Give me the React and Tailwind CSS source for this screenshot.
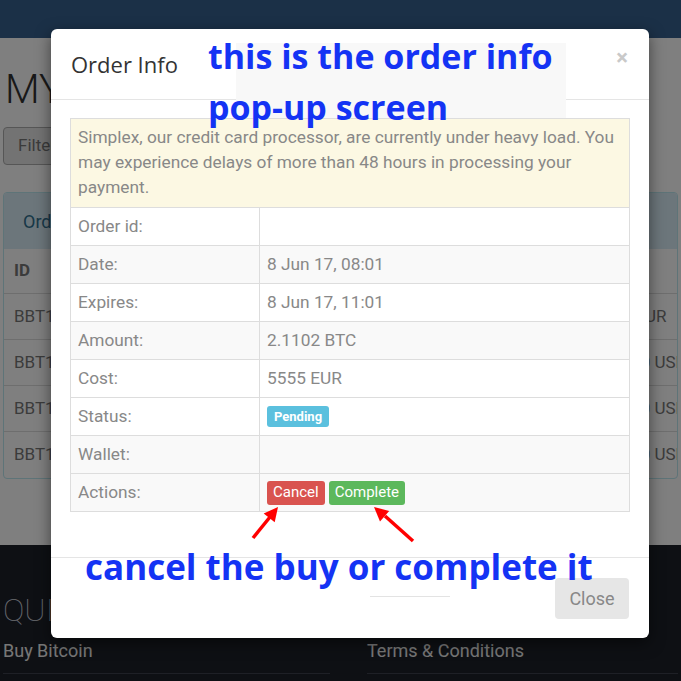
import React from "react";

const rows = [
  { label: "Order id:", value: "", bg: "bg-white" },
  { label: "Date:", value: "8 Jun 17, 08:01", bg: "bg-[#f9f9f9]" },
  { label: "Expires:", value: "8 Jun 17, 11:01", bg: "bg-white" },
  { label: "Amount:", value: "2.1102 BTC", bg: "bg-[#f9f9f9]" },
  { label: "Cost:", value: "5555 EUR", bg: "bg-white" },
  { label: "Status:", value: "pending", bg: "bg-white" },
  { label: "Wallet:", value: "", bg: "bg-[#f9f9f9]" },
  { label: "Actions:", value: "actions", bg: "bg-[#f9f9f9]" },
];

const orders = [
  { id: "BBT1D2C4", cost: "5555 EUR", pad: "" },
  { id: "BBT1A7F0", cost: "100.00 USD", pad: "pl-[5px]" },
  { id: "BBT19E3B", cost: "100.00 USD", pad: "pl-[5px]" },
  { id: "BBT15C88", cost: "100.00 USD", pad: "pl-[5px]" },
];

const Value = ({ value }) => {
  if (value === "pending") {
    return (
      <span className="inline-flex h-[21px] items-center rounded-[3px] bg-[#5bc0de] px-[7px] text-[13px] font-bold text-white">
        Pending
      </span>
    );
  }
  if (value === "actions") {
    return (
      <div className="flex gap-[4px]">
        <button className="h-[24px] rounded-[3px] bg-[#d9534f] px-[6px] text-[15px] text-white">
          Cancel
        </button>
        <button className="h-[24px] rounded-[3px] bg-[#5cb85c] px-[6px] text-[15px] text-white">
          Complete
        </button>
      </div>
    );
  }
  return <span>{value}</span>;
};

const App = () => {
  return (
    <div className="relative h-[681px] w-[681px] overflow-hidden bg-white font-['Roboto',sans-serif]">
      {/* page behind the modal */}
      <div className="h-[38px] bg-[#37618e]" />
      <div className="h-[507px] px-[3px] pt-[24px]">
        <h1 className="ml-[2px] text-[40px] font-light leading-[56px] text-[#333]">MY ORDERS</h1>
        <div className="mt-[9px] flex">
          <button className="h-[38px] rounded-[4px] border border-[#adadad] bg-[#e6e6e6] px-[14px] text-[17px] text-[#777]">
            Filter
          </button>
        </div>
        <div className="mt-[27px] overflow-hidden rounded-[4px] border border-[#bce8f1]">
          <div className="flex h-[56px] items-center bg-[#d9edf7] px-[19px] text-[18px] text-[#31708f]">
            Orders
          </div>
          <div className="grid h-[45px] grid-cols-[1fr_80px] items-center border-b border-[#ddd] px-[10px] text-[17px] font-bold text-[#777]">
            <span>ID</span>
            <span>Cost</span>
          </div>
          {orders.map((o) => (
            <div
              key={o.id}
              className="grid h-[46px] grid-cols-[1fr_84px] items-center border-b border-[#ddd] pl-[10px] text-[17px] text-[#777] last:border-b-0"
            >
              <span>{o.id}</span>
              <span className={`whitespace-nowrap ${o.pad}`}>{o.cost}</span>
            </div>
          ))}
        </div>
      </div>
      <footer className="h-[136px] bg-[#1d2029] px-[3px] pt-[47px]">
        <h3 className="text-[32px] font-thin leading-[36px] text-[#d5d9e0]">QUICK LINKS</h3>
        <div className="mt-[9px] grid grid-cols-[327px_1fr] gap-[37px] text-[18px] text-[#eeeeee]">
          <div className="border-b border-[#3c414c] pb-[9px]">Buy Bitcoin</div>
          <div className="border-b border-[#3c414c] pb-[9px]">Terms &amp; Conditions</div>
        </div>
      </footer>

      {/* backdrop */}
      <div className="absolute inset-0 bg-black/50" />

      {/* modal */}
      <div className="absolute left-[51px] top-[29px] w-[598px] rounded-[6px] bg-white shadow-[0_5px_15px_rgba(0,0,0,0.5)]">
        <div className="flex h-[71px] items-center justify-between border-b border-[#e5e5e5] pl-[20px] pr-[21px]">
          <h4 className="font-['Open_Sans',sans-serif] text-[22px] text-[#333]">Order Info</h4>
          <button className="-mt-[12px] text-[22px] font-bold leading-none text-[#c9c9c9]">&times;</button>
        </div>
        <div className="px-[19px] pb-[45px] pt-[18px]">
          <div className="border-l border-t border-[#ddd] text-[17.3px] text-[#888]">
            <div className="h-[89px] border-b border-r border-[#ddd] bg-[#fcf8e3] py-[6px] pl-[7px] pr-[4px] leading-[25px]">
              Simplex, our credit card processor, are currently under heavy load. You may experience
              delays of more than 48 hours in processing your payment.
            </div>
            {rows.map((r) => (
              <div
                key={r.label}
                className={`grid h-[38px] grid-cols-[189px_1fr] border-b border-[#ddd] ${r.bg}`}
              >
                <div className="flex items-center border-r border-[#ddd] px-[7px]">{r.label}</div>
                <div className="flex items-center border-r border-[#ddd] px-[7px]">
                  <Value value={r.value} />
                </div>
              </div>
            ))}
          </div>
        </div>
        <div className="flex justify-end border-t border-[#e5e5e5] pb-[19px] pr-[20px] pt-[20px]">
          <button className="h-[41px] w-[74px] rounded-[4px] bg-[#e6e6e6] text-[18px] text-[#888]">
            Close
          </button>
        </div>
      </div>

      {/* annotations pasted over the screenshot */}
      <div className="absolute left-[236px] top-[43px] h-[75px] w-[330px] bg-[#f8f8f8]" />
      <div className="absolute left-[370px] top-[596px] h-px w-[80px] bg-[#e3e3e3]" />
      <div className="absolute left-[208px] top-[39px] whitespace-nowrap font-['Open_Sans',sans-serif] text-[34px] font-bold leading-none text-[#1433f4]">
        this is the order info
      </div>
      <div className="absolute left-[208px] top-[90px] whitespace-nowrap font-['Open_Sans',sans-serif] text-[34px] font-bold leading-none text-[#1433f4]">
        pop-up screen
      </div>
      <div className="absolute left-[85px] top-[549px] whitespace-nowrap font-['Open_Sans',sans-serif] text-[35px] font-bold leading-none text-[#1433f4]">
        cancel the buy or complete it
      </div>
      <svg className="pointer-events-none absolute inset-0" width="681" height="681" viewBox="0 0 681 681">
        <line x1="253" y1="538" x2="270" y2="517" stroke="#ff0000" strokeWidth="3.5" />
        <polygon points="278,507 274.7,522.3 263.7,513.5" fill="#ff0000" />
        <line x1="413" y1="541" x2="385" y2="516" stroke="#ff0000" strokeWidth="3.5" />
        <polygon points="374,507 389.2,510.9 380,521.5" fill="#ff0000" />
      </svg>
    </div>
  );
};

export default App;
